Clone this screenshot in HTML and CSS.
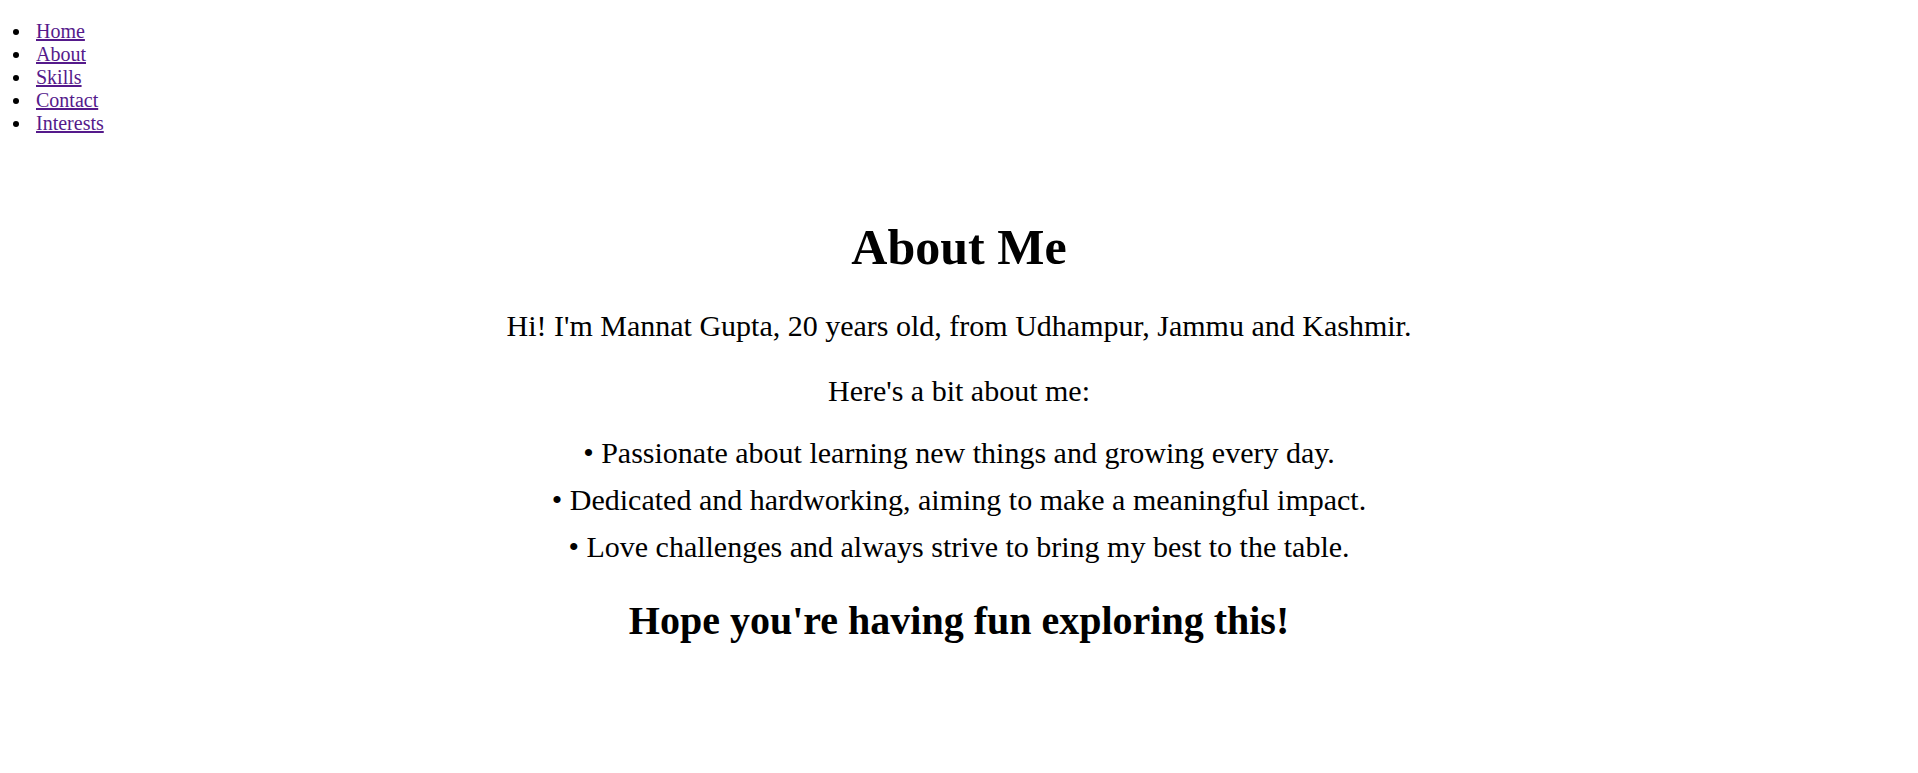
FILE: index.html
```html
<!DOCTYPE html>
<html lang="en">
<head>
<meta charset="utf-8">
<title>About Me</title>
<link rel="stylesheet" href="styles.css">
</head>
<body>
<nav class="nav">
  <ul class="nav-list">
    <li class="nav-item"><a class="nav-link" href="#home">Home</a></li>
    <li class="nav-item"><a class="nav-link" href="#about">About</a></li>
    <li class="nav-item"><a class="nav-link" href="#skills">Skills</a></li>
    <li class="nav-item"><a class="nav-link" href="#contact">Contact</a></li>
    <li class="nav-item"><a class="nav-link" href="#interests">Interests</a></li>
  </ul>
</nav>
<main class="about">
  <h1 class="about-title">About Me</h1>
  <p class="about-text">Hi! I'm Mannat Gupta, 20 years old, from Udhampur, Jammu and Kashmir.</p>
  <p class="about-text about-text-second">Here's a bit about me:</p>
  <div class="about-points">
    <p class="point">• Passionate about learning new things and growing every day.</p>
    <p class="point">• Dedicated and hardworking, aiming to make a meaningful impact.</p>
    <p class="point">• Love challenges and always strive to bring my best to the table.</p>
  </div>
  <h2 class="about-closing">Hope you're having fun exploring this!</h2>
</main>
</body>
</html>
```
FILE: styles.css
```css
html, body {
  margin: 0;
  padding: 0;
  background: #ffffff;
  color: #000000;
  font-family: "Liberation Serif", "Times New Roman", serif;
}

.nav-list {
  margin: 20px 0 0 0;
  padding-left: 32px;
  font-size: 20px;
  line-height: 23px;
}

.nav-item {
  padding-left: 4px;
}

.nav-link {
  color: #551a8b;
}

.about {
  margin-top: 83px;
  text-align: center;
}

.about-title {
  margin: 0;
  font-size: 50px;
  line-height: 58px;
  font-weight: bold;
}

.about-text {
  margin: 32px 0 0 0;
  font-size: 30px;
  line-height: 35px;
}

.about-text-second {
  margin-top: 30px;
}

.about-points {
  margin-top: 27px;
  display: flex;
  flex-direction: column;
  gap: 12px;
}

.point {
  margin: 0;
  font-size: 30px;
  line-height: 35px;
}

.about-closing {
  margin: 34px 0 0 0;
  font-size: 40px;
  line-height: 46px;
  font-weight: bold;
}
```
